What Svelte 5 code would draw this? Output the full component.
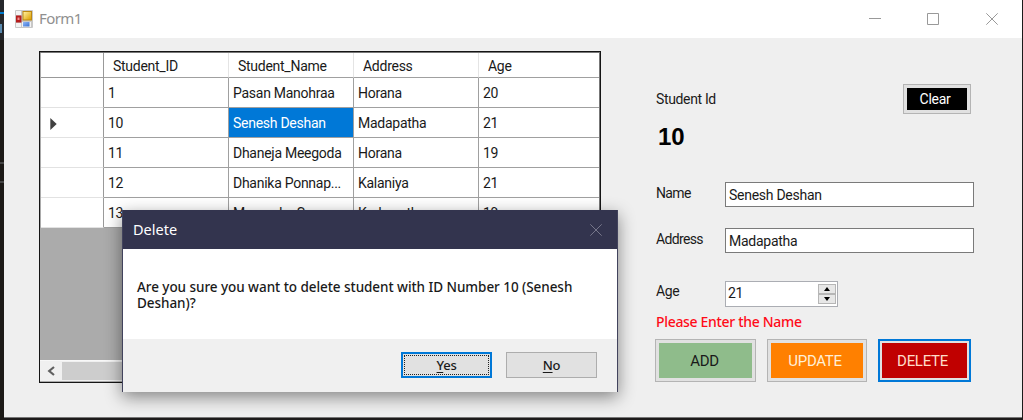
<script>
  const columns = ['Student_ID', 'Student_Name', 'Address', 'Age'];
  const rows = [
    ['1', 'Pasan Manohraa', 'Horana', '20'],
    ['10', 'Senesh Deshan', 'Madapatha', '21'],
    ['11', 'Dhaneja Meegoda', 'Horana', '19'],
    ['12', 'Dhanika Ponnap...', 'Kalaniya', '21'],
    ['13', 'Manendra Sen', 'Kadawatha', '19']
  ];
  const selected = 1;
</script>

<div class="desktop">
  <div class="behind" aria-hidden="true"><i></i><i></i><i></i><i></i></div>
  <main class="window">
    <header class="titlebar">
      <svg class="appicon" width="18" height="18" viewBox="0 0 18 18">
        <defs>
          <linearGradient id="gold" x2="1" y2="1"><stop stop-color="#fff0a0" /><stop offset="1" stop-color="#dca000" /></linearGradient>
          <linearGradient id="blue" x2="1" y2="1"><stop stop-color="#8fb8fa" /><stop offset="1" stop-color="#3a70d0" /></linearGradient>
        </defs>
        <rect width="18" height="18" rx="1" fill="#c8c8c8" />
        <path d="M1 1h5v4H1zM1 13h5v4H1zM7 12h9v5H7z" fill="#f3f3f3" />
        <rect x="1" y="5.5" width="5.5" height="7" fill="#b61c1c" />
        <rect x="2.5" y="7.5" width="2" height="2.5" fill="#f09090" />
        <rect x="7.5" y="1" width="9.5" height="9.5" fill="#bd8810" />
        <rect x="8.5" y="2" width="7.5" height="7.5" fill="url(#gold)" />
        <rect x="8" y="12" width="6.5" height="4.5" fill="url(#blue)" />
      </svg>
      <span class="caption">Form1</span>
      <svg class="controls" width="140" height="14" viewBox="0 0 140 14" fill="none" stroke="#999">
        <path d="M3 6.5h12M61.5 1.5h11v11h-11zM120.3 1.3l11.4 11.4M131.7 1.3l-11.4 11.4" />
      </svg>
    </header>

    <div class="content">
      <section class="grid">
        <div class="row head">
          <div class="handle"></div>
          {#each columns as c}<div class="cell"><span>{c}</span></div>{/each}
        </div>
        {#each rows as r, i}
          <div class="row">
            <div class="handle">
              {#if i === selected}<svg width="7" height="12" viewBox="0 0 7 12"><path d="M.3 0L6.7 6L.3 12z" fill="#404040" /></svg>{/if}
            </div>
            {#each r as v, j}<div class="cell" class:active={i === selected && j === 1}><span>{v}</span></div>{/each}
          </div>
        {/each}
        <div class="scroll">
          <div class="arrow"><svg width="8" height="10" viewBox="0 0 8 10" fill="none" stroke="#606060" stroke-width="2.2"><path d="M7 1L2.2 5L7 9" /></svg></div>
          <div class="thumb"></div>
        </div>
      </section>

      <section class="form">
        <div class="idrow"><label for="clear">Student Id</label><button id="clear" class="btn clear"><span>Clear</span></button></div>
        <div class="idvalue">10</div>
        <div class="field"><span class="lbl">Name</span><div class="box"><span>Senesh Deshan</span></div></div>
        <div class="field addr"><span class="lbl">Address</span><div class="box"><span>Madapatha</span></div></div>
        <div class="field age">
          <span class="lbl">Age</span>
          <div class="box num"><span>21</span>
            <div class="spin">
              <i><svg width="6" height="4" viewBox="0 0 6 4"><path d="M0 4L3 0L6 4z" /></svg></i>
              <i><svg width="6" height="4" viewBox="0 0 6 4"><path d="M0 0L3 4L6 0z" /></svg></i>
            </div>
          </div>
        </div>
        <div class="error">Please Enter the Name</div>
        <div class="actions">
          <button class="btn add"><span>ADD</span></button>
          <button class="btn update"><span>UPDATE</span></button>
          <button class="btn delete"><span>DELETE</span></button>
        </div>
      </section>
    </div>
  </main>

  <div class="dialog" role="dialog" aria-labelledby="dt">
    <div class="dhead">
      <span id="dt">Delete</span>
      <svg width="12" height="12" viewBox="0 0 12 12" stroke="#77778a"><path d="M.3 .3l11.4 11.4M11.7 .3L.3 11.7" /></svg>
    </div>
    <div class="dbody"><div class="l1">Are you sure you want to delete student with ID Number 10 (Senesh</div><div class="l2">Deshan)?</div></div>
    <div class="dfoot">
      <button class="yes"><span><u>Y</u>es</span></button>
      <button class="no"><span><u>N</u>o</span></button>
    </div>
  </div>
</div>

<style>
  :global(body) { margin: 0; overflow: hidden; }
  .desktop { position: relative; box-sizing: border-box; width: 1023px; height: 420px; padding-left: 4px; background: #1c1a1a; font: 15px/18px Roboto, "Liberation Sans", Arial, sans-serif; letter-spacing: -0.3px; color: #1a1a1a; }
  .desktop * { box-sizing: border-box; }
  .behind { position: absolute; left: 0; top: 0; width: 4px; height: 420px; background: linear-gradient(#25272b 40px, #1c1a17 40px); }
  .behind i { position: absolute; left: 0; width: 4px; height: 2px; background: #454545; top: 162px; }
  .behind i:nth-child(2) { top: 181px; }
  .behind i:nth-child(3) { top: 12px; background: #007acc; }
  .behind i:nth-child(4) { top: 24px; width: 2px; height: 9px; background: #5a8aaf; }
  .window { width: 1018px; height: 418px; background: #efefef; border-bottom: 1px solid #777; display: flex; flex-direction: column; }
  .titlebar { height: 38px; background: #fff; display: flex; align-items: center; padding: 0 16px 0 11px; }
  .caption { margin: -2px 0 0 6px; font: 15px/20px "Noto Sans", sans-serif; color: #909090; letter-spacing: -0.6px; flex: 1; }
  .controls { margin: 0; }
  .content { flex: 1; display: flex; align-items: flex-start; padding: 13px 0 0 35px; }
  .grid { width: 562px; height: 332px; border: 1px solid #151515; background: #ababab; display: flex; flex-direction: column; flex: none; box-shadow: inset 0 1px #777, inset -1px 0 #777; padding: 0 1px; }
  .row { display: grid; grid-template-columns: 63px 125px 125px 125px 1fr; height: 30px; flex: none; background: #fff; }
  .head { margin-top: 1px; height: 25px; }
  .handle { margin-left: -1px; width: 63px; border-right: 1px solid #999; border-bottom: 1px solid #e2e2e2; display: flex; align-items: center; padding: 2px 0 0 9px; }
  .handle { margin-left: 0; }
  .head .handle { border-bottom-color: #999; }
  .cell { border-right: 1px solid #a0a0a0; border-bottom: 1px solid #a0a0a0; padding: 6px 0 0 4px; white-space: nowrap; overflow: hidden; }
  .cell span, .box > span { display: inline-block; transform: scaleX(.935); transform-origin: 0 0; }
  .head .cell { border-right-color: #e4e4e4; padding: 4px 0 0 9px; }
  .cell:last-child { border-right: 0; }
  .active { background: #0078d7; color: #fff; }
  .scroll { margin: auto -1px 1px -1px; height: 21px; background: #f0f0f0; display: flex; border-top: 1px solid #f8f8f8; }
  .arrow { width: 22px; display: flex; align-items: center; justify-content: center; }
  .thumb { width: 410px; margin: 1px 0; background: #cdcdcd; }
  .form { width: 320px; margin-left: 54px; padding-top: 33px; }
  .idrow { display: flex; justify-content: space-between; height: 30px; padding: 0 4px 0 1px; }
  .idrow label { padding-top: 6px; font-size: 14px; letter-spacing: -0.35px; }
  button { font: inherit; letter-spacing: inherit; margin: 0; color: inherit; padding: 0; text-align: center; }
  .btn { border: 1px solid #b4b4b4; outline: 0; padding: 3px; display: flex; background: #e1e1e1; }
  .btn span { flex: 1; align-self: stretch; display: flex; align-items: center; justify-content: center; }
  .clear { width: 68px; height: 30px; font-size: 14px; }
  .clear span { background: #000; color: #fff; padding-right: 4px; }
  .idvalue { height: 68px; padding: 9px 0 0 3px; font: 700 24px/28px "Liberation Sans", Arial, sans-serif; color: #000; letter-spacing: 0; }
  .field { display: flex; height: 25px; }
  .lbl { width: 70px; padding: 2px 0 0 1px; font-size: 14px; letter-spacing: -0.65px; }
  .box { width: 249px; border: 1px solid #7a7a7a; background: #fff; padding: 3px 0 0 3px; }
  .addr { margin-top: 21px; }
  .age { margin-top: 28px; }
  .age .lbl { padding-top: 1px; letter-spacing: -0.4px; }
  .num { width: 113px; height: 26px; display: flex; justify-content: space-between; border-color: #abadb3; padding: 2px 1px 2px 2px; }
  .spin { width: 18px; display: grid; grid-template-rows: 1fr 1fr; }
  .spin i { background: #e7e7e7; border: 1px solid #b6b6b6; display: flex; align-items: center; justify-content: center; }
  .error { height: 33px; padding: 7px 0 0 1px; color: #ff0b18; font: 500 14px/18px "Noto Sans", sans-serif; letter-spacing: -0.32px; white-space: nowrap; }
  .actions { display: flex; gap: 11px; height: 43px; }
  .add { width: 101px; }
  .update { width: 100px; }
  .delete { width: 93px; }
  .add span, .update span, .delete span { padding-right: 4px; letter-spacing: -0.3px; }
  .add span { background: #8fbc8b; padding-right: 2px; }
  .update span { background: #ff8000; color: #ffefd5; }
  .delete { border: 2px solid #0078d7; padding: 2px; }
  .delete span { background: #c00000; color: #ffdcc8; }
  .dialog { position: absolute; left: 122px; top: 210px; width: 496px; height: 182px; border: solid #42435d; border-width: 0 1px; background: #fff; box-shadow: 0 5px 16px rgba(0,0,0,.45); font-family: "Noto Sans", sans-serif; display: flex; flex-direction: column; }
  .dhead { height: 39px; background: #33344e; color: #fff; display: flex; align-items: center; justify-content: space-between; padding: 0 15px 0 10px; font-size: 14.5px; letter-spacing: 0; }
  .dhead span { margin-top: -1px; }
  .dbody { flex: 1; padding: 30px 0 0 14px; font-size: 13.5px; font-weight: 500; line-height: 16px; letter-spacing: -0.05px; white-space: nowrap; }
  .dfoot { height: 53px; background: #f0f0f0; display: flex; justify-content: flex-end; gap: 14px; padding: 13px 20px 0 0; }
  .dfoot button { width: 91px; height: 26px; background: #e1e1e1; border: 1px solid #adadad; font-size: 13px; font-weight: 500; line-height: 24px; }
  .dfoot .yes { border: 2px solid #0078d7; padding: 1px; }
  .yes span { display: block; height: 20px; border: 1px dotted #222; line-height: 18px; }
  u { text-underline-offset: 2px; }
</style>
